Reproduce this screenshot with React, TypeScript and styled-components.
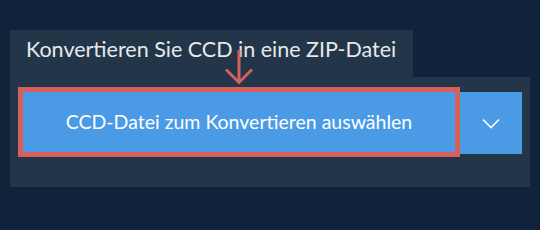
import React from 'react';
import styled, { createGlobalStyle } from 'styled-components';

const GlobalStyle = createGlobalStyle`
  html, body {
    margin: 0;
    padding: 0;
    background: #10233a;
  }
  body {
    font-family: Lato, "Open Sans", sans-serif;
  }
`

const App: React.FC = () => {
  return (
    <>
      <GlobalStyle />
      <Page>
        <Tab>
          <TabTitle>Konvertieren Sie CCD in eine ZIP-Datei</TabTitle>
        </Tab>
        <Panel>
          <Row>
            <Highlight>
              <ArrowIcon viewBox="0 0 30 36" aria-hidden="true">
                <line x1="15" y1="1" x2="15" y2="34" stroke="#d9605a" strokeWidth="3" />
                <polyline points="2,20.5 15,33.5 28,20.5" fill="none" stroke="#d9605a" strokeWidth="3" />
              </ArrowIcon>
              <PickButton>CCD-Datei zum Konvertieren auswählen</PickButton>
            </Highlight>
            <MenuButton aria-label="Mehr Optionen">
              <svg width="18" height="11" viewBox="0 0 18 11">
                <polyline points="1,1.5 9,9.5 17,1.5" fill="none" stroke="#ffffff" strokeWidth="1.6" />
              </svg>
            </MenuButton>
          </Row>
        </Panel>
      </Page>
    </>
  )
}

const Page = styled.div`
  padding: 30px 0 0 10px;
`

const Tab = styled.div`
  width: 403px;
  height: 47px;
  box-sizing: border-box;
  padding: 6px 0 0 16px;
  background: #223549;
`

const TabTitle = styled.div`
  color: #e6e9ed;
  font-size: 21.5px;
  line-height: 26px;
  white-space: nowrap;
`

const Panel = styled.div`
  width: 520px;
  height: 110px;
  box-sizing: border-box;
  padding: 10px 0 0 8px;
  background: #223549;
`

const Row = styled.div`
  display: flex;
  align-items: flex-start;
`

const Highlight = styled.div`
  position: relative;
  width: 442px;
  height: 70px;
  box-sizing: border-box;
  border: 5px solid #d9605a;
`

const ArrowIcon = styled.svg`
  position: absolute;
  left: 50%;
  top: -43px;
  width: 30px;
  height: 36px;
  margin-left: -15px;
`

const PickButton = styled.button`
  width: 100%;
  height: 100%;
  border: 0;
  padding: 0;
  background: #4a9ae6;
  color: #ffffff;
  font-family: Lato, "Open Sans", sans-serif;
  font-size: 19.5px;
  line-height: 24px;
  cursor: pointer;
`

const MenuButton = styled.button`
  display: flex;
  align-items: center;
  justify-content: center;
  width: 62px;
  height: 62px;
  margin-top: 5px;
  border: 0;
  padding: 0;
  background: #4a9ae6;
  cursor: pointer;
`

export default App
